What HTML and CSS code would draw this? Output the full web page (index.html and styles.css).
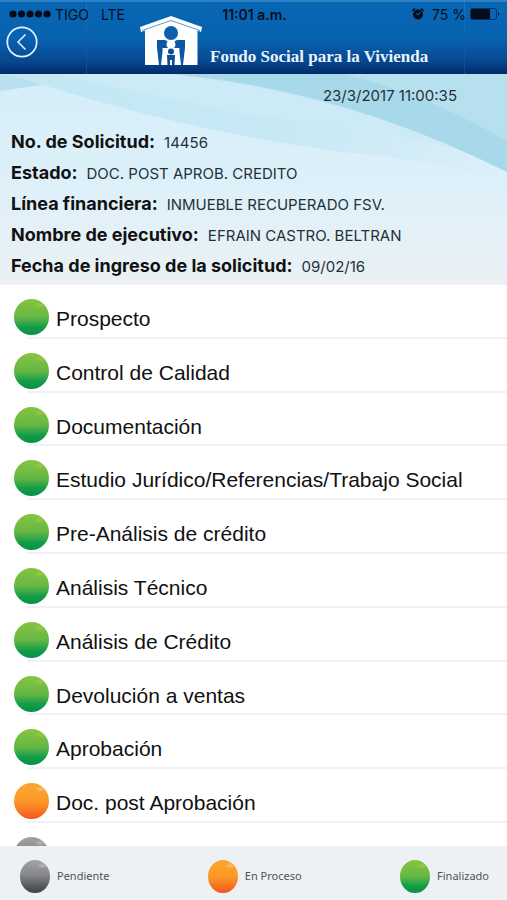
FILE: index.html
```html
<!DOCTYPE html>
<html lang="es">
<head>
	<meta charset="UTF-8">
	<meta name="viewport" content="width=device-width, initial-scale=1">
	<title>Fondo Social para la Vivienda</title>
	<link rel="stylesheet" href="styles.css">
</head>
<body>
	<header class="header">
		<div class="status">
			<div class="carrier">
				<svg class="signal" viewBox="0 0 42 8" width="42" height="8">
					<circle cx="4" cy="4" r="3.6"/>
					<circle cx="12.500" cy="4" r="3.6"/>
					<circle cx="21" cy="4" r="3.6"/>
					<circle cx="29.500" cy="4" r="3.6"/>
					<circle cx="38" cy="4" r="3.6"/>
				</svg>
				<span>TIGO</span>
				<span class="network">LTE</span>
			</div>
			<span class="time">11:01 a.m.</span>
			<div class="power">
				<svg viewBox="0 0 12 12" width="12" height="12">
					<circle cx="6" cy="6.500" r="5"/>
					<path d="M0.500 3 L3 0.700 M11.500 3 L9 0.700" stroke="#050d1c" stroke-width="1.600"/>
					<path d="M6 6.800 L8.200 4.300 M6 6.800 L4 5.800" stroke="#0b62ae" stroke-width="1.200" fill="none"/>
				</svg>
				<span>75 %</span>
				<svg viewBox="0 0 30 12" width="30" height="12">
					<rect x="0.500" y="0.500" width="26" height="11" rx="2" fill="none" stroke="#06316b"/>
					<rect x="1" y="1" width="19" height="10" rx="1"/>
					<path d="M28 4 Q30 6 28 8 Z"/>
				</svg>
			</div>
		</div>
		<button class="back" aria-label="Regresar">
			<svg viewBox="0 0 32 32" width="32" height="32" fill="none" stroke="#e4f2ff">
				<circle cx="16" cy="16" r="14.700" stroke-width="1.700"/>
				<path d="M19.500 8.500 L12 16 L19.500 23.500" stroke-width="1.500"/>
			</svg>
		</button>
		<div class="brand">
			<svg viewBox="0 0 62 50" width="62" height="50" fill="#fff">
				<path d="M31 0 L62 11 L61 16 L57.500 14.500 V49 H5 V14.500 L1 16 L0 11 Z"/>
				<path d="M2 14.500 L31 4.500 L60 14.500" fill="none" stroke="#5b9bd0" stroke-width="1"/>
				<circle cx="31" cy="17" r="7" fill="#0b5fac"/>
				<path d="M17 24 H25 Q31 28 37 24 H45 V32 Q44 40 43 49 H41 Q40 40 39 32 H23 Q22 40 21 49 H19 Q18 40 17 32 Z" fill="#0b57a2"/>
				<circle cx="31" cy="28.500" r="4.500"/>
				<path d="M22.500 32 H39.500 L37.500 49 H24.500 Z"/>
				<circle cx="31" cy="35.500" r="3" fill="#0b4f99"/>
				<path d="M27 39 H35 L34.500 49 H32 V44 H30 V49 H27.500 Z" fill="#0b4f99"/>
			</svg>
			<span>Fondo Social para la Vivienda</span>
		</div>
	</header>

	<section class="info">
		<svg class="waves" viewBox="0 0 507 211" preserveAspectRatio="none">
			<defs>
				<linearGradient id="fade">
					<stop offset="0" stop-color="#c3e8f4"/>
					<stop offset="0.500" stop-color="#c5e8f4"/>
					<stop offset="1" stop-color="#c5e8f4" stop-opacity="0"/>
				</linearGradient>
			</defs>
			<path d="M0 0 H507 V108 Q430 85 340 78 Q180 55 40 10 Z" fill="url(#fade)"/>
			<path d="M60 0 H170 Q350 20 507 98 V84 Q340 50 253 42 Q140 20 60 0 Z" fill="#cdebf6"/>
			<path d="M0 0 Q25 4 42 11 L0 17 Z" fill="#b8e0ee"/>
			<path d="M170 0 H507 V98 Q340 15 170 0 Z" fill="#a8d9eb"/>
			<path d="M345 0 H507 V67 Q430 22 345 0 Z" fill="#b7e0ef"/>
		</svg>
		<time class="date">23/3/2017 11:00:35</time>
		<dl class="details">
			<div><dt>No. de Solicitud:</dt><dd>14456</dd></div>
			<div><dt>Estado:</dt><dd>DOC. POST APROB. CREDITO</dd></div>
			<div><dt>Línea financiera:</dt><dd>INMUEBLE RECUPERADO FSV.</dd></div>
			<div><dt>Nombre de ejecutivo:</dt><dd>EFRAIN CASTRO. BELTRAN</dd></div>
			<div><dt>Fecha de ingreso de la solicitud:</dt><dd>09/02/16</dd></div>
		</dl>
	</section>

	<ul class="steps">
		<li><i class="ball green"></i><span>Prospecto</span></li>
		<li><i class="ball green"></i><span>Control de Calidad</span></li>
		<li><i class="ball green"></i><span>Documentación</span></li>
		<li><i class="ball green"></i><span>Estudio Jurídico/Referencias/Trabajo Social</span></li>
		<li><i class="ball green"></i><span>Pre-Análisis de crédito</span></li>
		<li><i class="ball green"></i><span>Análisis Técnico</span></li>
		<li><i class="ball green"></i><span>Análisis de Crédito</span></li>
		<li><i class="ball green"></i><span>Devolución a ventas</span></li>
		<li><i class="ball green"></i><span>Aprobación</span></li>
		<li><i class="ball orange"></i><span>Doc. post Aprobación</span></li>
		<li><i class="ball gray"></i></li>
	</ul>

	<footer class="legend">
		<div><i class="ball gray"></i><span>Pendiente</span></div>
		<div><i class="ball orange"></i><span>En Proceso</span></div>
		<div><i class="ball green"></i><span>Finalizado</span></div>
	</footer>
</body>
</html>
```
FILE: styles.css
```css
* {
	box-sizing: border-box;
}
body {
	display: flex;
	flex-direction: column;
	height: 100vh;
	margin: 0;
	background: #fff;
	color: #111;
	font-family: Inter, "Liberation Sans", sans-serif;
}

/* header */
.header {
	display: grid;
	grid-template-columns: 86px minmax(0, 1fr) 42px;
	grid-template-rows: 24px 50px;
	flex: none;
	border-top: 2px solid #2f7fc4;
	height: 74px;
	background:
		linear-gradient(#2a72b8, #0d4990) 86px 0 / 1px 100% no-repeat,
		linear-gradient(#2a72b8, #0d4990) right 42px top 0 / 1px 100% no-repeat,
		linear-gradient(#0766b4, #0763b0 50%, #07488f 82%, #022a6b);
}
.status {
	display: grid;
	grid-template-columns: 1fr auto 1fr;
	grid-area: 1 / 1 / 2 / 4;
	align-items: center;
	padding: 0 7px 0 9px;
	color: #050d1c;
	font-size: 14px;
}
.status svg {
	fill: #050d1c;
}
.carrier, .power {
	display: flex;
	align-items: center;
	gap: 4px;
}
.network {
	margin-left: 8px;
}
.time {
	font-weight: 600;
}
.power {
	justify-content: flex-end;
}
.power span {
	margin-left: 4px;
}
.back {
	grid-area: 2 / 1;
	justify-self: start;
	width: 32px;
	height: 32px;
	margin-left: 6px;
	padding: 0;
	border: 0;
	background: none;
	cursor: pointer;
}
.brand {
	display: flex;
	grid-area: 1 / 2 / 3 / 3;
	align-items: flex-end;
	gap: 8px;
	padding: 0 0 10px 54px;
	color: #e9f3ff;
	font: bold 17px/18px "Liberation Serif", "Times New Roman", serif;
	white-space: nowrap;
}

/* request details */
.info {
	position: relative;
	flex: none;
	padding: 10px 0 4px 11px;
	background: linear-gradient(#d5eefa, #ddf0f9 50%, #ebf1f5);
}
.waves {
	position: absolute;
	top: 0;
	left: 0;
	width: 100%;
	height: 100%;
}
.date {
	position: relative;
	display: block;
	margin-right: 50px;
	color: #25313a;
	font-size: 15px;
	line-height: 24px;
	text-align: right;
}
.details {
	position: relative;
	margin: 18px 0 0;
}
.details div {
	display: flex;
	align-items: baseline;
	gap: 9px;
	line-height: 31px;
}
.details dt {
	font-size: 18px;
	font-weight: 700;
}
.details dd {
	margin: 0;
	color: #25313a;
	font-size: 15px;
	line-height: 20px;
}

/* steps */
.steps {
	display: grid;
	flex: 1;
	grid-template-rows: repeat(10, 1fr) 23px;
	min-height: 0;
	margin: 0;
	padding: 0;
	overflow: hidden;
	font: 21px/40px "Liberation Sans", Arial, sans-serif;
	list-style: none;
}
.steps li {
	display: flex;
	align-items: flex-start;
	gap: 7px;
	min-height: 0;
	padding: 14px 0 0 14px;
	background: linear-gradient(#f1f2f3, #f1f2f3) 27px 100% / 100% 2px no-repeat;
}
.steps li:last-child {
	background: none;
}
.ball {
	flex: none;
	width: 35px;
	height: 36px;
	border-radius: 50%;
}
.green {
	background:
		radial-gradient(ellipse 6px 3px at 74% 17%, #9acb3e, transparent),
		linear-gradient(#86c440, #66b745 50%, #109c48 80%, #079247);
}
.orange {
	background:
		radial-gradient(ellipse 6px 3px at 74% 17%, #ffbd68, transparent),
		linear-gradient(#fba52f, #fb9a28 50%, #f76b20 85%, #ef5223);
}
.gray {
	background:
		radial-gradient(ellipse 6px 3px at 74% 17%, #b5b7b9, transparent),
		linear-gradient(#a0a2a4, #85878a 45%, #55575a 80%, #404244);
}

/* legend */
.legend {
	display: flex;
	flex: none;
	align-items: center;
	justify-content: space-between;
	height: 54px;
	padding: 6px 18px 0 20px;
	background: #edf1f4;
	color: #505458;
	font: 11px/16px "Noto Sans", "Open Sans", sans-serif;
}
.legend div {
	display: flex;
	align-items: center;
	gap: 7px;
}
.legend .ball {
	width: 30px;
	height: 33px;
}
```
